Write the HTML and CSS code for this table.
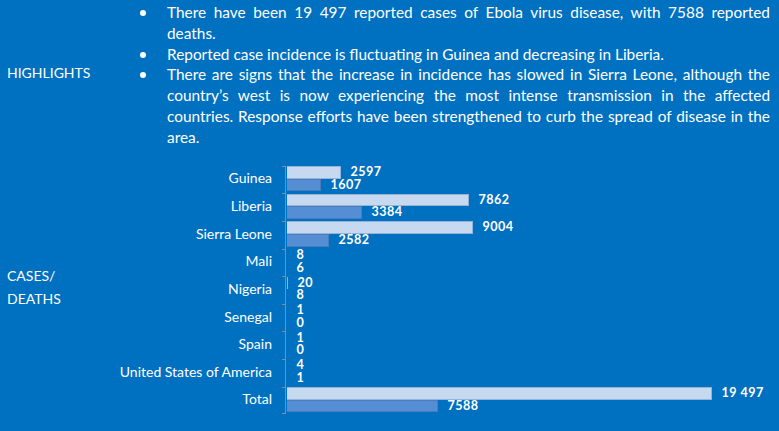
FILE: index.html
```html
<!DOCTYPE html>
<html lang="en">
<head>
<meta charset="utf-8">
<title>Ebola situation summary</title>
<link rel="stylesheet" href="styles.css">
</head>
<body>
<main class="page">
  <section class="highlights">
    <div class="side-label hl-label">HIGHLIGHTS</div>
    <ul class="bullets">
      <li><span class="ln j">There have been 19 497 reported cases of Ebola virus disease, with 7588 reported</span><span class="ln">deaths.</span></li>
      <li><span class="ln">Reported case incidence is fluctuating in Guinea and decreasing in Liberia.</span></li>
      <li><span class="ln j">There are signs that the increase in incidence has slowed in Sierra Leone, although the</span><span class="ln j">country’s west is now experiencing the most intense transmission in the affected</span><span class="ln j">countries. Response efforts have been strengthened to curb the spread of disease in the</span><span class="ln">area.</span></li>
    </ul>
  </section>
  <section class="cases">
    <div class="side-label cases-label">CASES/<br>DEATHS</div>
    <div class="chart">
      <div class="crow">
        <div class="cat">Guinea</div><div class="tick"></div>
        <div class="bars">
          <div class="bar-line"><span class="bar light" style="width:54px"></span><span class="val">2597</span></div>
          <div class="bar-line"><span class="bar dark" style="width:34px"></span><span class="val">1607</span></div>
        </div>
      </div>
      <div class="crow">
        <div class="cat">Liberia</div><div class="tick"></div>
        <div class="bars">
          <div class="bar-line"><span class="bar light" style="width:182px"></span><span class="val">7862</span></div>
          <div class="bar-line"><span class="bar dark" style="width:75px"></span><span class="val">3384</span></div>
        </div>
      </div>
      <div class="crow">
        <div class="cat">Sierra Leone</div><div class="tick"></div>
        <div class="bars">
          <div class="bar-line"><span class="bar light" style="width:186px"></span><span class="val">9004</span></div>
          <div class="bar-line"><span class="bar dark" style="width:42px"></span><span class="val">2582</span></div>
        </div>
      </div>
      <div class="crow">
        <div class="cat">Mali</div><div class="tick"></div>
        <div class="bars">
          <div class="bar-line"><span class="bar empty"></span><span class="val">8</span></div>
          <div class="bar-line"><span class="bar empty"></span><span class="val">6</span></div>
        </div>
      </div>
      <div class="crow">
        <div class="cat">Nigeria</div><div class="tick"></div>
        <div class="bars">
          <div class="bar-line"><span class="bar light thin" style="width:1px"></span><span class="val">20</span></div>
          <div class="bar-line"><span class="bar empty"></span><span class="val">8</span></div>
        </div>
      </div>
      <div class="crow">
        <div class="cat">Senegal</div><div class="tick"></div>
        <div class="bars">
          <div class="bar-line"><span class="bar empty"></span><span class="val">1</span></div>
          <div class="bar-line"><span class="bar empty"></span><span class="val">0</span></div>
        </div>
      </div>
      <div class="crow">
        <div class="cat">Spain</div><div class="tick"></div>
        <div class="bars">
          <div class="bar-line"><span class="bar empty"></span><span class="val">1</span></div>
          <div class="bar-line"><span class="bar empty"></span><span class="val">0</span></div>
        </div>
      </div>
      <div class="crow">
        <div class="cat">United States of America</div><div class="tick"></div>
        <div class="bars">
          <div class="bar-line"><span class="bar empty"></span><span class="val">4</span></div>
          <div class="bar-line"><span class="bar empty"></span><span class="val">1</span></div>
        </div>
      </div>
      <div class="crow last">
        <div class="cat">Total</div><div class="tick"></div>
        <div class="bars">
          <div class="bar-line"><span class="bar light" style="width:425px"></span><span class="val">19 497</span></div>
          <div class="bar-line"><span class="bar dark" style="width:151px"></span><span class="val">7588</span></div>
        </div>
      </div>
    </div>
  </section>
</main>
</body>
</html>
```
FILE: styles.css
```css
* { box-sizing: border-box; }
html, body { margin: 0; padding: 0; }
body {
  background: #0070c0;
  color: #ffffff;
  font-family: Lato, "Open Sans", "Liberation Sans", sans-serif;
  width: 779px;
  height: 431px;
  overflow: hidden;
}
.page {
  width: 779px;
  height: 431px;
  display: flex;
  flex-direction: column;
}
.highlights {
  display: grid;
  grid-template-columns: 131px 1fr;
  align-items: start;
  height: 165.7px;
  padding: 2px 9px 0 0;
}
.side-label {
  padding-left: 7px;
  font-size: 14px;
  line-height: 21px;
}
.hl-label {
  margin-top: 60px;
}
.bullets {
  list-style: none;
  margin: 0;
  padding: 0;
  font-size: 15.4px;
  line-height: 20.8px;
}
.bullets li {
  position: relative;
  padding-left: 36px;
}
.bullets li::before {
  content: "";
  position: absolute;
  left: 9px;
  top: 8px;
  width: 6px;
  height: 6px;
  border-radius: 50%;
  background: #ffffff;
}
.ln {
  display: block;
  white-space: nowrap;
  text-align: left;
}
.ln.j {
  text-align: justify;
  text-align-last: justify;
  word-spacing: -2px;
}
.cases {
  display: grid;
  grid-template-columns: 110px 1fr;
  align-items: center;
}
.cases-label {
  line-height: 23.3px;
  margin-bottom: 5.6px;
}
.chart {
  display: flex;
  flex-direction: column;
}
.crow {
  display: grid;
  grid-template-columns: 172px 3px 1fr;
  height: 27.62px;
}
.cat {
  font-size: 14px;
  line-height: 18px;
  text-align: right;
  padding-right: 10px;
  padding-bottom: 2px;
  align-self: center;
  white-space: nowrap;
}
.tick {
  border-top: 1px solid #8a8a8a;
}
.crow.last .tick {
  border-bottom: 1px solid #8a8a8a;
}
.bars {
  border-left: 1px solid #8a8a8a;
  display: flex;
  flex-direction: column;
  padding-top: 0.5px;
  padding-left: 1px;
}
.bar-line {
  display: flex;
  align-items: center;
  height: 12.6px;
}
.bar {
  display: block;
  height: 100%;
  flex: none;
}
.bar.empty { width: 0; }
.bar.light {
  background: #c6d9f1;
  border: 1px solid #95b3d7;
  border-left: none;
}
.bar.light.thin { border: none; background: #95b3d7; }
.bar.dark {
  background: #558ed5;
  border: 1px solid #4a7ebb;
  border-left: none;
}
.val {
  margin-left: 9.5px;
  font-size: 12.6px;
  letter-spacing: 0.45px;
  font-weight: 700;
  line-height: 12.6px;
  white-space: nowrap;
}
```
